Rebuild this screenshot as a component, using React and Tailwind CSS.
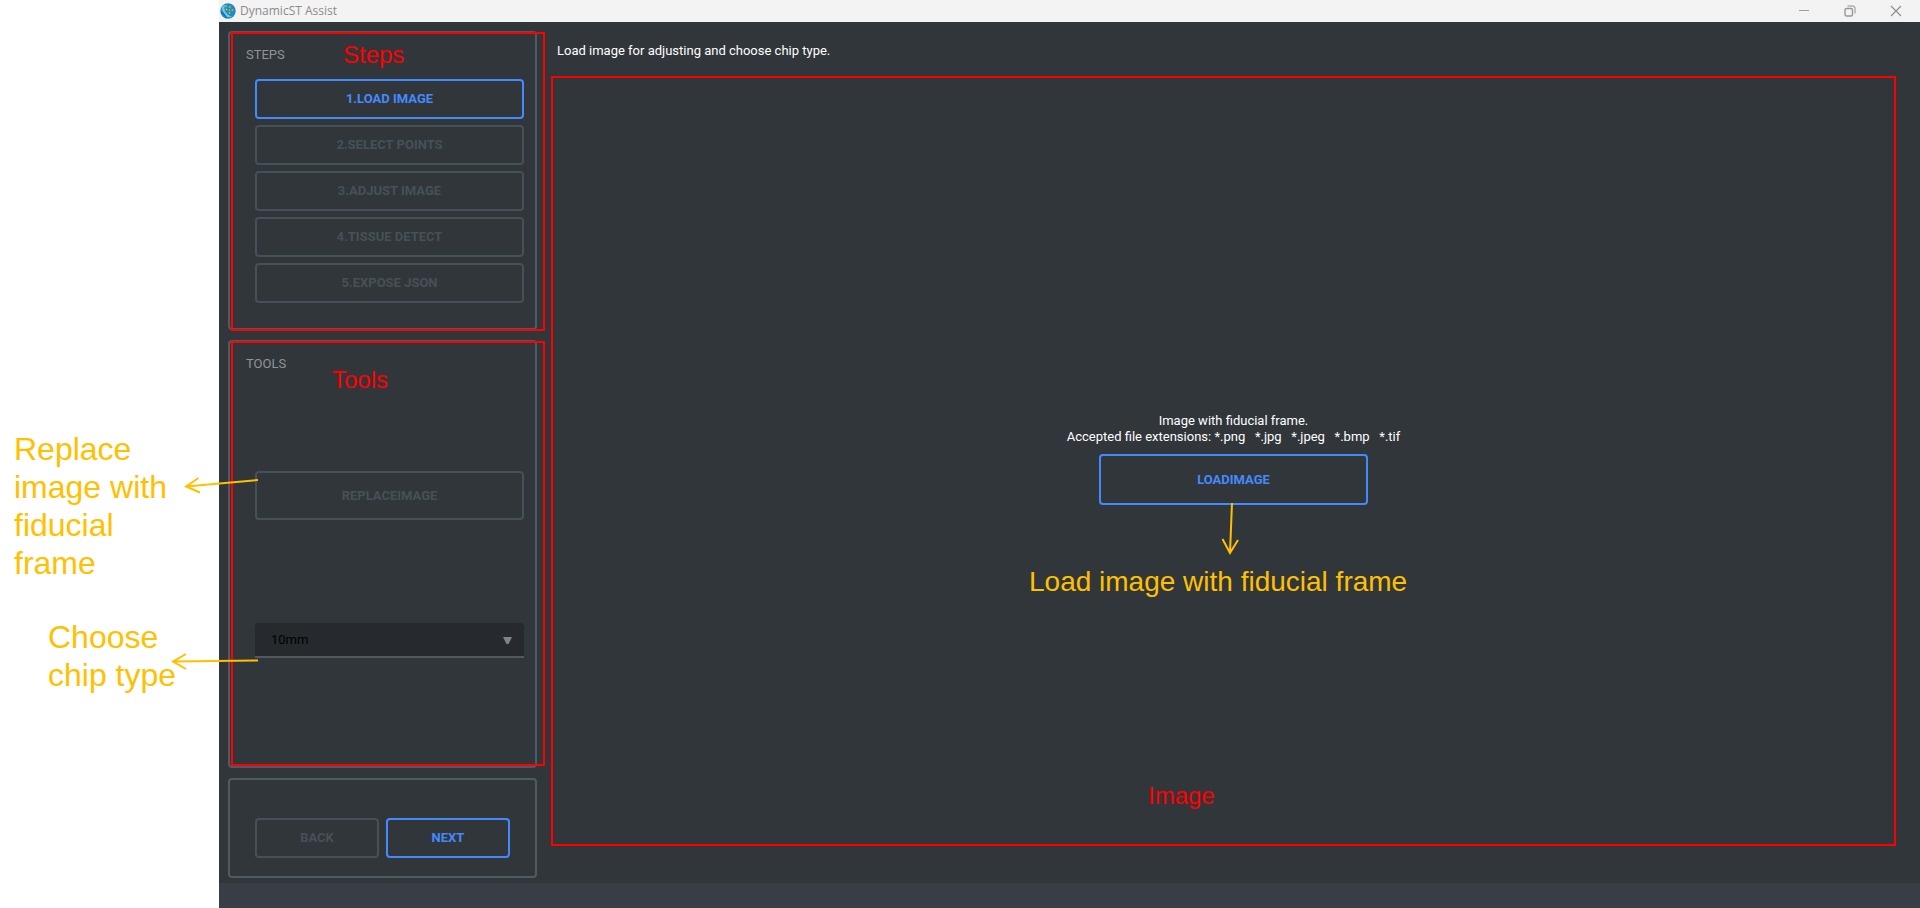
const STEPS = ['1.LOAD IMAGE', '2.SELECT POINTS', '3.ADJUST IMAGE', '4.TISSUE DETECT', '5.EXPOSE JSON'];

function Logo() {
  return (
    <svg className="size-4" viewBox="0 0 16 16" aria-hidden="true">
      <circle cx="8" cy="8" r="7.7" fill="#2389c2" />
      <path d="M1.500 4.500C2.500 3 4 2 5 2C4 4.500 4 7 6 9.500S9.500 13 12 13.500C10 14.500 7.500 14.500 6 13.500C4.500 11 2.500 9 1.500 4.500Z" fill="#6fc6e8" />
      <path d="M1.200 9C3.500 10 5 12 6.500 15" stroke="#0f6aa3" strokeWidth="1.200" fill="none" />
      <path d="M6 3L10 4.500L12.500 7L9 9.500L6.500 6.500Z" stroke="#3f9f7a" strokeWidth="0.900" fill="none" />
      <g fill="#d5d93c">
        <circle cx="6" cy="3" r="0.800" />
        <circle cx="10" cy="4" r="0.800" />
        <circle cx="6.500" cy="6.500" r="0.800" />
        <circle cx="9.500" cy="7" r="0.700" />
        <circle cx="12.500" cy="7" r="0.800" />
        <circle cx="9.500" cy="10" r="0.800" />
      </g>
    </svg>
  );
}

function OutlineButton({ active, className = '', children }) {
  const tone = active ? 'border-[#448aff] text-[#448aff]' : 'border-[#465057] text-[#465157]';
  return (
    <button
      type="button"
      disabled={!active}
      className={`flex items-center justify-center rounded border-2 text-[13px] leading-4 font-bold ${tone} ${className}`}
    >
      {children}
    </button>
  );
}

function Panel({ className = '', children }) {
  return (
    <section className={`relative rounded border-2 border-[#4f5b62] px-[25px] ${className}`}>{children}</section>
  );
}

function TitleBar() {
  return (
    <header className="flex h-[22px] shrink-0 items-center bg-[#f3f3f3] text-[#8c8c8c]">
      <div className="flex flex-1 items-center gap-1 pl-px">
        <Logo />
        <h1 className="font-['Open_Sans',sans-serif] text-xs leading-4">DynamicST Assist</h1>
      </div>
      <div className="flex items-center gap-[30px] pr-4">
        <button type="button" aria-label="Minimize" className="flex size-4 items-center justify-center">
          <svg className="size-3" viewBox="0 0 12 12" fill="none" stroke="#a0a0a0">
            <path d="M1 5.500H11" />
          </svg>
        </button>
        <button type="button" aria-label="Restore" className="flex size-4 items-center justify-center">
          <svg className="size-3" viewBox="0 0 12 12" fill="none" stroke="#999999">
            <rect x="1" y="3.500" width="7.500" height="7.500" rx="1.500" strokeWidth="1.400" />
            <path d="M3.500 1H8.500Q11 1 11 3.500V8.500" stroke="#b0b0b0" strokeWidth="1.400" />
          </svg>
        </button>
        <button type="button" aria-label="Close" className="flex size-4 items-center justify-center">
          <svg className="size-3" viewBox="0 0 12 12" fill="none" stroke="#8c8c8c" strokeWidth="1.100">
            <path d="M1 1L11 11M11 1L1 11" />
          </svg>
        </button>
      </div>
    </header>
  );
}

function Sidebar() {
  return (
    <div className="flex w-[318px] shrink-0 flex-col gap-[10px] pt-[9px] pb-[5px] pl-[9px]">
      <Panel className="pb-[25px]">
        <h2 className="-ml-[9px] pt-[14px] pb-4 text-[13px] leading-4 text-[#8f9498]">STEPS</h2>
        <div className="-mr-[14px] flex flex-col gap-[6px]">
          {STEPS.map((step, i) => (
            <OutlineButton key={step} active={i === 0} className="h-10">
              {step}
            </OutlineButton>
          ))}
        </div>
        <div className="pointer-events-none absolute -top-px -right-[10px] -bottom-[3px] left-px border-2 border-[#ff0000]" />
        <p className="absolute top-2 left-[113px] font-['Liberation_Sans',sans-serif] text-2xl leading-7 text-[#ff0000]">
          Steps
        </p>
      </Panel>

      <Panel className="flex flex-1 flex-col">
        <h2 className="-ml-[9px] pt-[14px] text-[13px] leading-4 text-[#8f9498]">TOOLS</h2>
        <OutlineButton className="mt-[99px] -mr-[14px] h-[49px]">REPLACEIMAGE</OutlineButton>
        <div className="relative mt-[103px] -mr-[14px]">
          <select
            aria-label="Chip type"
            className="block h-[35px] w-full appearance-none rounded-t border-b-2 border-[#54585e] bg-[#26292e] pl-4 text-[13px] leading-4 text-black"
          >
            <option>10mm</option>
            <option>6mm</option>
          </select>
          <svg className="pointer-events-none absolute top-[14px] right-3 h-2 w-[9px]" viewBox="0 0 9 8" aria-hidden="true">
            <path d="M0 0H9L5.500 7H3.500Z" fill="#808387" />
          </svg>
        </div>
        <div className="pointer-events-none absolute -top-px -right-[10px] bottom-0 left-px border-2 border-[#ff0000]" />
        <p className="absolute top-[24px] left-[102px] font-['Liberation_Sans',sans-serif] text-2xl leading-7 text-[#ff0000]">
          Tools
        </p>
      </Panel>

      <Panel className="flex h-[100px] items-end gap-[7px] pb-[18px]">
        <OutlineButton className="h-10 flex-1">BACK</OutlineButton>
        <OutlineButton active className="h-10 flex-1">
          NEXT
        </OutlineButton>
      </Panel>
    </div>
  );
}

function ImageArea() {
  return (
    <main className="flex min-w-0 flex-1 flex-col pl-[10px]">
      <p className="px-[10px] pt-[21px] text-[13px] leading-4 text-white">
        Load image for adjusting and choose chip type.
      </p>
      <div className="relative mt-[17px] mb-[37px] flex flex-1 flex-col items-center justify-center">
        <p className="text-center text-[13px] leading-4 whitespace-pre text-white">
          {'Image with fiducial frame.\nAccepted file extensions: *.png   *.jpg   *.jpeg   *.bmp   *.tif'}
        </p>
        <div className="relative mt-[9px] mb-1">
          <OutlineButton active className="h-[51px] w-[269px]">
            LOADIMAGE
          </OutlineButton>
          <svg
            className="absolute top-[49px] left-[122px] h-[52px] w-[18px]"
            viewBox="0 0 18 52"
            fill="none"
            stroke="#ffc000"
            strokeWidth="2"
            aria-hidden="true"
          >
            <path d="M11 0L9 50M1.500 36L9 50L17 37" />
          </svg>
          <p className="absolute top-[112px] -left-[70px] font-['Liberation_Sans',sans-serif] text-[28px] leading-8 whitespace-nowrap text-[#ffc000]">
            Load image with fiducial frame
          </p>
        </div>
        <div className="pointer-events-none absolute inset-y-0 right-6 left-1 border-2 border-[#ff0000]" />
        <p className="absolute bottom-[36px] left-[601px] font-['Liberation_Sans',sans-serif] text-2xl leading-7 text-[#ff0000]">
          Image
        </p>
      </div>
    </main>
  );
}

function Notes() {
  return (
    <aside className="relative z-10 w-[219px] shrink-0 pt-[430px] font-['Liberation_Sans',sans-serif] text-[32px] leading-[38px] text-[#ffc000]">
      <p className="w-[180px] pl-[14px]">Replace image with fiducial frame</p>
      <p className="mt-9 w-[190px] pl-12">Choose chip type</p>
      <svg
        className="absolute top-[476px] left-[184px] h-[18px] w-[74px]"
        viewBox="0 0 74 18"
        fill="none"
        stroke="#ffc000"
        strokeWidth="2"
        aria-hidden="true"
      >
        <path d="M74 4L2 10.500M14.500 2L2 10.500L16 16.500" />
      </svg>
      <svg
        className="absolute top-[653px] left-[171px] h-[18px] w-[87px]"
        viewBox="0 0 87 18"
        fill="none"
        stroke="#ffc000"
        strokeWidth="2"
        aria-hidden="true"
      >
        <path d="M87 7.500L2 8.500M15 1L2 8.500L15 16" />
      </svg>
    </aside>
  );
}

export default function App() {
  return (
    <div className="flex min-h-screen bg-white font-[Roboto,sans-serif]">
      <Notes />
      <div className="flex min-w-0 flex-1 flex-col bg-[#31363b]">
        <TitleBar />
        <div className="flex flex-1">
          <Sidebar />
          <ImageArea />
        </div>
        <footer className="h-[25px] shrink-0 bg-[#393d46]" />
      </div>
    </div>
  );
}
